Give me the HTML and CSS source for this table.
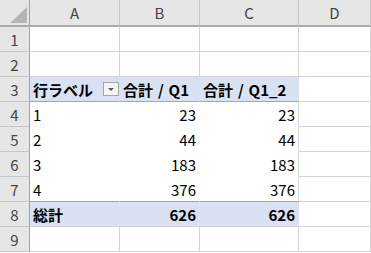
FILE: index.html
```html
<!DOCTYPE html>
<html>
<head>
    <link rel="stylesheet" href="styles.css">
</head>
<body>
    <div class="sheet">
        <div class="corner"><span class="corner-mark"></span></div>
        <div class="col-head">A</div>
        <div class="col-head">B</div>
        <div class="col-head">C</div>
        <div class="col-head">D</div>

        <div class="row-head">1</div>
        <div class="cell"></div><div class="cell"></div><div class="cell"></div><div class="cell"></div>

        <div class="row-head">2</div>
        <div class="cell"></div><div class="cell"></div><div class="cell"></div><div class="cell"></div>

        <div class="row-head">3</div>
        <div class="cell pivot-head label"><span>行ラベル</span><span class="filter"></span></div>
        <div class="cell pivot-head">合計 / Q1</div>
        <div class="cell pivot-head">合計 / Q1_2</div>
        <div class="cell"></div>

        <div class="row-head">4</div>
        <div class="cell pivot">1</div>
        <div class="cell pivot num">23</div>
        <div class="cell pivot num last">23</div>
        <div class="cell"></div>

        <div class="row-head">5</div>
        <div class="cell pivot">2</div>
        <div class="cell pivot num">44</div>
        <div class="cell pivot num last">44</div>
        <div class="cell"></div>

        <div class="row-head">6</div>
        <div class="cell pivot">3</div>
        <div class="cell pivot num">183</div>
        <div class="cell pivot num last">183</div>
        <div class="cell"></div>

        <div class="row-head">7</div>
        <div class="cell pivot pre-total">4</div>
        <div class="cell pivot pre-total num">376</div>
        <div class="cell pivot pre-total num last">376</div>
        <div class="cell"></div>

        <div class="row-head">8</div>
        <div class="cell pivot-total">総計</div>
        <div class="cell pivot-total num">626</div>
        <div class="cell pivot-total num">626</div>
        <div class="cell"></div>

        <div class="row-head">9</div>
        <div class="cell"></div><div class="cell"></div><div class="cell"></div><div class="cell"></div>
    </div>
</body>
</html>
```

FILE: styles.css
```css
body {
    margin: 0;
    background-color: #fff;
    font-family: "Noto Sans CJK JP", sans-serif;
}
.sheet {
    display: grid;
    grid-template-columns: 30px 90px 80px 99px 72px;
    grid-template-rows: 27px repeat(9, 25px);
    font-size: 15px;
    color: #000;
}
.sheet > div {
    box-sizing: border-box;
    display: flex;
    align-items: center;
    white-space: nowrap;
    border-right: 1px solid #d4d4d4;
    border-bottom: 1px solid #d4d4d4;
}
.corner {
    background-color: #e6e6e6;
    border-bottom: 2px solid #ababab !important;
    border-right: 1px solid #a0a0a0 !important;
    justify-content: flex-end;
    align-items: flex-end !important;
    padding: 0 2px 2px 0;
}
.corner-mark {
    width: 17px;
    height: 16px;
    background-color: #b4b4b4;
    clip-path: polygon(100% 0, 100% 100%, 0 100%);
}
.col-head {
    background-color: #e6e6e6;
    color: #444;
    justify-content: center;
    border-right-color: #c6c6c6 !important;
    border-bottom: 2px solid #ababab !important;
}
.col-head:last-child {
    border-right-color: #ababab !important;
}
.row-head {
    background-color: #e6e6e6;
    color: #444;
    justify-content: center;
    border-right: 1px solid #a0a0a0 !important;
    border-bottom-color: #c6c6c6 !important;
}
.cell {
    padding: 0 3px 0 3px;
}
.num {
    justify-content: flex-end;
}

/* pivot table */
.pivot {
    border-right-color: #fff !important;
    border-bottom-color: #fff !important;
}
.pivot.last {
    border-right-color: #d4d4d4 !important;
}
.pivot.pre-total {
    border-bottom-color: #8ea9db !important;
}
.pivot-head {
    background-color: #d9e1f2;
    font-weight: bold;
    word-spacing: 1.5px;
    border-right-color: #d9e1f2 !important;
    border-bottom-color: #8ea9db !important;
}
.pivot-head.label {
    justify-content: space-between;
    padding-right: 0;
}
.pivot-total {
    background-color: #d9e1f2;
    font-weight: bold;
    border-right-color: #d9e1f2 !important;
}
.filter {
    box-sizing: border-box;
    width: 16px;
    height: 14px;
    border: 1px solid #a6a6a6;
    background-color: #f4f4f4;
    display: flex;
    align-items: center;
    justify-content: center;
}
.filter::after {
    content: "";
    border-top: 3px solid #555;
    border-left: 3px solid transparent;
    border-right: 3px solid transparent;
    margin-top: 1px;
}
```
